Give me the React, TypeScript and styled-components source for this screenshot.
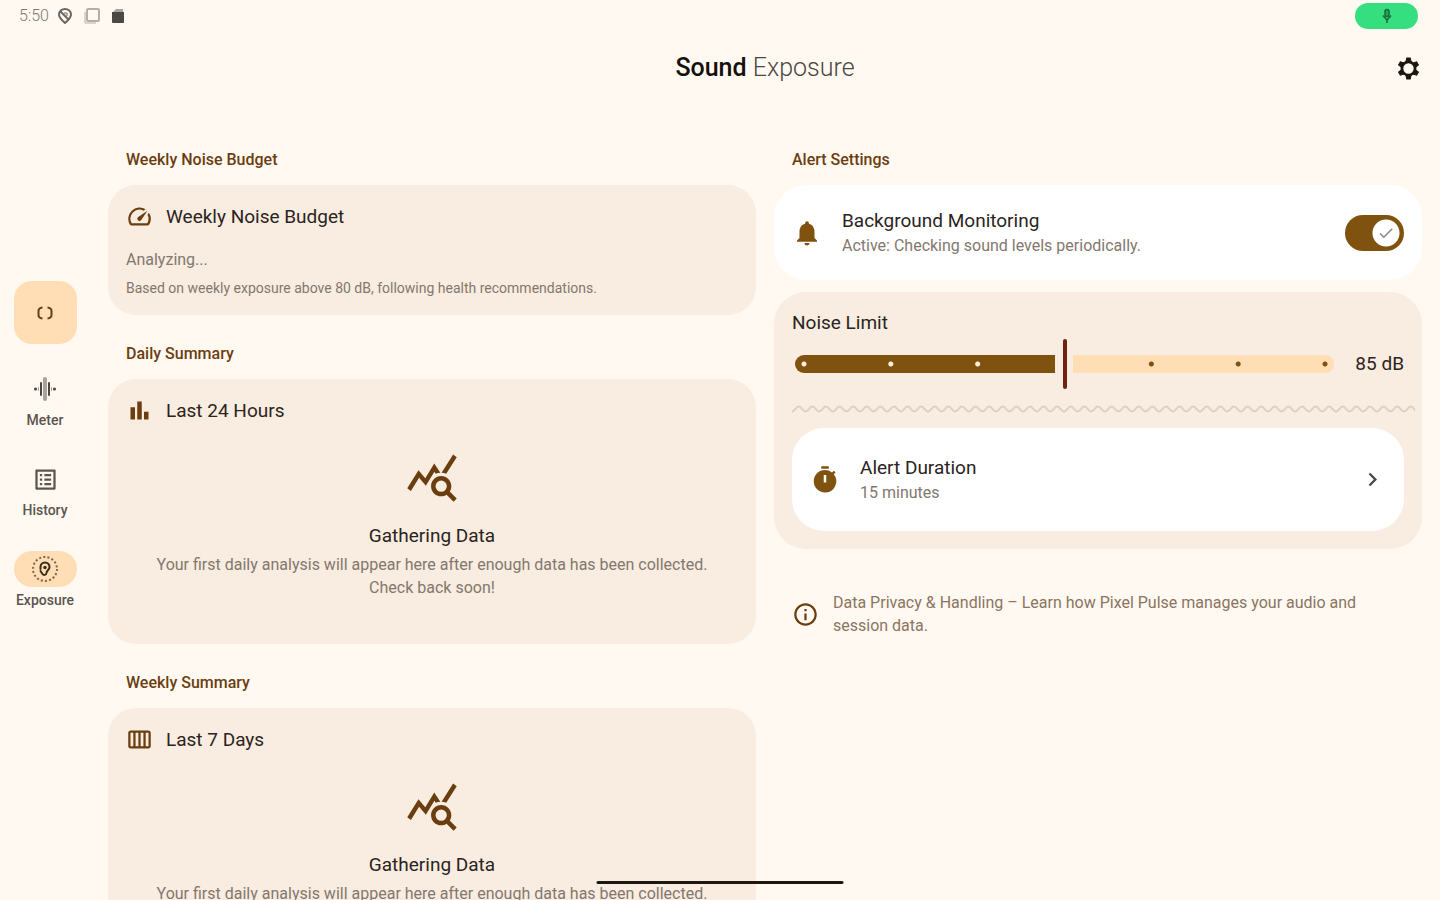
import React, { useState } from "react";
import styled, { createGlobalStyle, css } from "styled-components";
import {
  MdBarChart,
  MdCheck,
  MdChevronRight,
  MdInfoOutline,
  MdNotifications,
  MdOutlineCalendarViewWeek,
  MdOutlineListAlt,
  MdOutlineSpeed,
  MdQueryStats,
  MdTimer,
} from "react-icons/md";

const color = {
  page: "#fff9f2",
  card: "#f9ece0",
  raised: "#ffffff",
  accent: "#ffddb5",
  primary: "#80520f",
  deep: "#6b3e10",
  text: "#2b241d",
  muted: "#83786e",
  outline: "#dccfc3",
};

const GlobalStyle = createGlobalStyle`
  * { box-sizing: border-box; }
  body {
    margin: 0;
    background: ${color.page};
    color: ${color.text};
    font-family: Roboto, "Liberation Sans", sans-serif;
  }
  h1, h2, h3, p { margin: 0; }
  button { font: inherit; color: inherit; border: 0; background: none; padding: 0; cursor: pointer; }
`;

const Screen = styled.div`
  display: flex;
  flex-direction: column;
  height: 100vh;
  overflow: hidden;
`;

const StatusBar = styled.div`
  display: flex;
  flex: none;
  align-items: center;
  justify-content: space-between;
  height: 32px;
  padding: 0 22px 0 19px;
`;

const StatusIcons = styled.div`
  display: flex;
  align-items: center;
  gap: 10px;
  color: #7b7671;
  font-size: 16px;
  font-weight: 300;
  line-height: 20px;

  time { margin-right: -2px; }
`;

const MicPill = styled.div`
  display: flex;
  align-items: center;
  justify-content: center;
  width: 63px;
  height: 26px;
  border-radius: 13px;
  background: #35de7f;
  color: #176b3b;
`;

const Shell = styled.div`
  display: flex;
  flex: 1;
  min-height: 0;
`;

const Rail = styled.nav`
  display: flex;
  flex: none;
  flex-direction: column;
  align-items: center;
  justify-content: center;
  width: 90px;
  padding-bottom: 42px;
`;

const RailFab = styled.button`
  display: flex;
  align-items: center;
  justify-content: center;
  width: 63px;
  height: 63px;
  margin-bottom: 27px;
  border-radius: 18px;
  background: ${color.accent};
  color: ${color.deep};
`;

const RailItem = styled.a`
  display: flex;
  flex-direction: column;
  align-items: center;
  gap: 4px;
  height: 90px;
  color: #5b554f;
  font-size: 14px;
  font-weight: 500;
  line-height: 18px;
  text-decoration: none;

  &:last-child { height: 58px; }
`;

const RailIcon = styled.span<{ $active?: boolean }>`
  display: flex;
  align-items: center;
  justify-content: center;
  width: 63px;
  height: 36px;
  border-radius: 18px;
  background: ${(p) => (p.$active ? color.accent : "transparent")};
`;

const Main = styled.main`
  display: flex;
  flex: 1;
  flex-direction: column;
  min-width: 0;
  padding: 0 18px;
`;

const TopBar = styled.header`
  display: grid;
  grid-template-columns: 1fr auto 1fr;
  flex: none;
  align-items: center;
  height: 72px;
`;

const Title = styled.h1`
  grid-column: 2;
  color: #14100c;
  font-size: 25px;
  font-weight: 500;
  line-height: 32px;

  span { color: #4a4641; font-weight: 300; }
`;

const IconButton = styled.button`
  display: flex;
  justify-self: end;
  margin-right: 1px;
`;

const Columns = styled.div`
  display: grid;
  grid-template-columns: 1fr 1fr;
  gap: 18px;
  flex: 1;
  align-items: start;
  min-height: 0;
  padding-top: 44px;
  overflow: auto;
  scrollbar-width: none;
`;

const Column = styled.div`
  display: flex;
  flex-direction: column;
`;

const SectionLabel = styled.h2`
  padding: 0 18px;
  margin-bottom: 13px;
  color: ${color.deep};
  font-size: 16px;
  font-weight: 500;
  line-height: 24px;
`;

const Card = styled.section<{ $tall?: boolean }>`
  padding: 18px;
  margin-bottom: 27px;
  border-radius: 28px;
  background: ${color.card};
  ${(p) => p.$tall && css`min-height: 265px;`}
`;

const CardHead = styled.div`
  display: flex;
  align-items: center;
  gap: 13px;
  color: ${color.deep};
`;

const CardTitle = styled.h3`
  color: ${color.text};
  font-size: 19px;
  font-weight: 400;
  line-height: 27px;
`;

const Body = styled.p`
  color: ${color.muted};
  font-size: 16px;
  line-height: 23px;
`;

const Note = styled.p`
  margin-top: 8px;
  color: ${color.muted};
  font-size: 14px;
  line-height: 18px;
`;

const Analysis = styled.div`
  padding-top: 18px;
`;

const Empty = styled.div`
  display: flex;
  flex-direction: column;
  align-items: center;
  padding-top: 26px;
  text-align: center;
  color: ${color.deep};

  h3 { margin: 18px 0 4px; }
`;

const SettingRow = styled.label`
  display: flex;
  align-items: center;
  min-height: 95px;
  padding: 0 18px;
  margin-bottom: 12px;
  border-radius: 32px;
  background: ${color.raised};
  color: ${color.primary};
`;

const DurationRow = styled.button`
  display: flex;
  align-items: center;
  width: 100%;
  min-height: 103px;
  padding: 0 18px;
  border-radius: 32px;
  background: ${color.raised};
  color: ${color.primary};
  text-align: left;
`;

const RowText = styled.span`
  display: flex;
  flex: 1;
  flex-direction: column;
  padding-left: 20px;
`;

const RowTitle = styled.span`
  color: ${color.text};
  font-size: 19px;
  line-height: 26px;
`;

const RowSub = styled.span`
  color: ${color.muted};
  font-size: 16px;
  line-height: 23px;
`;

const Switch = styled.span`
  position: relative;
  display: flex;
  width: 59px;
  height: 36px;

  input {
    appearance: none;
    width: 100%;
    height: 100%;
    margin: 0;
    border-radius: 18px;
    background: radial-gradient(circle at 18px 50%, #ffffff 13px, transparent 14px) #b9aca0;
    cursor: pointer;
  }
  input:checked {
    background: radial-gradient(circle at 41px 50%, #ffffff 13px, transparent 14px) ${color.primary};
  }
  svg {
    position: absolute;
    top: 9px;
    left: 32px;
    color: #8b8580;
    pointer-events: none;
  }
`;

const LimitCard = styled.section`
  padding: 18px;
  border-radius: 32px;
  background: ${color.card};
`;

const LimitLabel = styled.label`
  display: block;
  color: ${color.text};
  font-size: 19px;
  line-height: 26px;
`;

const LimitRow = styled.div`
  display: flex;
  align-items: center;
  gap: 21px;
  height: 56px;
  padding-left: 3px;

  output {
    font-size: 19px;
    line-height: 26px;
  }
`;

const STEPS = 6;

const tickLayers = (share: number) =>
  Array.from({ length: STEPS + 1 }, (_, i) => i / STEPS)
    .filter((at) => Math.abs(at - share) > 0.01)
    .map(
      (at) =>
        `radial-gradient(circle at calc(9px + (100% - 18px) * ${at}) 50%, ${
          at < share ? "#ffeedd" : color.primary
        } 2px, transparent 3px)`
    )
    .join(",");

const trackFill = css<{ $share: number }>`
  height: 18px;
  border-radius: 9px;
  background: ${(p) => tickLayers(p.$share)},
    linear-gradient(
      to right,
      ${color.primary} calc(${(p) => p.$share * 100}% - 9px),
      transparent calc(${(p) => p.$share * 100}% - 9px),
      transparent calc(${(p) => p.$share * 100}% + 9px),
      ${color.accent} calc(${(p) => p.$share * 100}% + 9px)
    );
`;

const Slider = styled.input<{ $share: number }>`
  appearance: none;
  flex: 1;
  min-width: 0;
  height: 50px;
  margin: 0;
  background: transparent;
  cursor: pointer;

  &::-webkit-slider-runnable-track { ${trackFill} }
  &::-moz-range-track { ${trackFill} }
  &::-webkit-slider-thumb {
    appearance: none;
    width: 4px;
    height: 50px;
    margin-top: -16px;
    border-radius: 2px;
    background: #6e2410;
  }
  &::-moz-range-thumb {
    width: 4px;
    height: 50px;
    border: 0;
    border-radius: 2px;
    background: #6e2410;
  }
`;

const WaveBox = styled.div`
  height: 36px;
  margin-right: -11px;

  svg { display: block; width: 100%; height: 36px; }
`;

const Privacy = styled.a`
  display: flex;
  align-items: center;
  gap: 14px;
  padding: 0 18px;
  margin-top: 42px;
  color: #8a7561;
  font-size: 16px;
  line-height: 23px;
  text-decoration: none;

  svg { flex: none; color: ${color.deep}; }
`;

const HomeHandle = styled.div`
  position: fixed;
  bottom: 16px;
  left: 50%;
  width: 247px;
  height: 3px;
  border-radius: 2px;
  background: #1d1712;
  transform: translateX(-50%);
`;

const LocationOffIcon = () => (
  <svg width="16" height="18" viewBox="0 0 16 18" fill="none" stroke="#6b6662" strokeWidth="2">
    <path d="M8 16C4 12.500 2 10 2 7.500a6 5.500 0 0 1 12 0c0 2.500-2 5-6 8.500z" />
    <path d="M3 4l9 9" />
    <path d="M7 6h3v3" strokeWidth="1" />
  </svg>
);

const CopyIcon = () => (
  <svg width="18" height="18" viewBox="0 0 18 18" fill="none" stroke="#b5afa9" strokeWidth="2">
    <rect x="4" y="2" width="12" height="12" rx="1" />
    <path d="M2 5v11h11" strokeWidth="1" />
  </svg>
);

const SdCardIcon = () => (
  <svg width="14" height="18" viewBox="0 0 14 18">
    <path d="M5 2h7v3H2z" fill="#a8a39e" />
    <path d="M1 5h12v10a1 1 0 0 1-1 1H2a1 1 0 0 1-1-1z" fill="#4b4846" />
  </svg>
);

const MicIcon = () => (
  <svg width="14" height="16" viewBox="0 0 14 16" fill="none" stroke="currentColor" strokeWidth="1.500">
    <rect x="5" y="1.500" width="4" height="7" rx="2" fill="currentColor" fillOpacity="0.500" />
    <path d="M3 7.500L7 12l4-4.500M7 11v4" />
  </svg>
);

const GearIcon = () => (
  <svg width="25" height="25" viewBox="0 0 24 24" fill="none" stroke="#1d1712">
    <circle cx="12" cy="12" r="6.300" strokeWidth="2.600" />
    {[0, 60, 120, 180, 240, 300].map((angle) => (
      <path key={angle} d="M9.600 5.400L10.300 2h3.400l0.700 3.400z" fill="#1d1712" transform={`rotate(${angle} 12 12)`} />
    ))}
  </svg>
);

const FloatIcon = () => (
  <svg width="18" height="14" viewBox="0 0 18 14" fill="none" stroke="currentColor" strokeWidth="2">
    <path d="M6.500 1.500Q2.500 2 2.500 5v4Q2.500 12 6.500 12.500" />
    <path d="M11.500 1.500Q15.500 2 15.500 5v4Q15.500 12 11.500 12.500" />
  </svg>
);

const MeterIcon = () => (
  <svg width="24" height="24" viewBox="0 0 24 24" fill="none" stroke="#4b4640" strokeLinecap="round">
    <path d="M8 6v12M16 6v12" strokeWidth="2" />
    <path d="M12 2v20" stroke="#a8a29c" strokeWidth="4" />
    <path d="M2.500 12h.1M21.400 12h.1" strokeWidth="3" />
    <path d="M5.500 10.500v3M18.500 10.500v3" stroke="#a8a29c" strokeWidth="1" />
  </svg>
);

const ExposureIcon = () => (
  <svg width="28" height="28" viewBox="0 0 28 28" fill="none" stroke="#3a2c1b">
    <circle cx="14" cy="14" r="12" strokeWidth="2" strokeDasharray="2 2.190" stroke="#7d6648" />
    <path
      d="M9.500 14V12a4.500 4.500 0 0 1 9 0c0 3-3 3.500-3 6a2.200 2.200 0 0 1-4 1l-2-3"
      strokeWidth="2"
      strokeLinecap="round"
    />
    <circle cx="14" cy="12.500" r="1.700" fill="#3a2c1b" stroke="none" />
  </svg>
);

const Wave = () => (
  <WaveBox>
    <svg aria-hidden="true">
      <defs>
        <pattern id="wave" width="13.600" height="36" patternUnits="userSpaceOnUse">
          <path
            d="M-3.400 17Q0 22 3.400 17T10.200 17T17 17"
            fill="none"
            stroke={color.outline}
            strokeWidth="2"
          />
        </pattern>
      </defs>
      <rect width="100%" height="36" fill="url(#wave)" />
    </svg>
  </WaveBox>
);

const GatheringData = () => (
  <Empty>
    <MdQueryStats size={54} />
    <CardTitle>Gathering Data</CardTitle>
    <Body>
      Your first daily analysis will appear here after enough data has been collected.
      <br />
      Check back soon!
    </Body>
  </Empty>
);

export default function App() {
  const [monitoring, setMonitoring] = useState(true);
  const [limit, setLimit] = useState(85);

  return (
    <Screen>
      <GlobalStyle />
      <StatusBar>
        <StatusIcons>
          <time>5:50</time>
          <LocationOffIcon />
          <CopyIcon />
          <SdCardIcon />
        </StatusIcons>
        <MicPill>
          <MicIcon />
        </MicPill>
      </StatusBar>
      <Shell>
        <Rail>
          <RailFab aria-label="Floating window">
            <FloatIcon />
          </RailFab>
          <RailItem href="#meter">
            <RailIcon><MeterIcon /></RailIcon>
            Meter
          </RailItem>
          <RailItem href="#history">
            <RailIcon><MdOutlineListAlt size={27} /></RailIcon>
            History
          </RailItem>
          <RailItem href="#exposure" aria-current="page">
            <RailIcon $active><ExposureIcon /></RailIcon>
            Exposure
          </RailItem>
        </Rail>
        <Main>
          <TopBar>
            <Title>
              Sound <span>Exposure</span>
            </Title>
            <IconButton aria-label="Settings">
              <GearIcon />
            </IconButton>
          </TopBar>
          <Columns>
            <Column>
              <SectionLabel>Weekly Noise Budget</SectionLabel>
              <Card>
                <CardHead>
                  <MdOutlineSpeed size={27} />
                  <CardTitle>Weekly Noise Budget</CardTitle>
                </CardHead>
                <Analysis>
                  <Body>Analyzing...</Body>
                  <Note>Based on weekly exposure above 80 dB, following health recommendations.</Note>
                </Analysis>
              </Card>
              <SectionLabel>Daily Summary</SectionLabel>
              <Card $tall>
                <CardHead>
                  <MdBarChart size={27} />
                  <CardTitle>Last 24 Hours</CardTitle>
                </CardHead>
                <GatheringData />
              </Card>
              <SectionLabel>Weekly Summary</SectionLabel>
              <Card $tall>
                <CardHead>
                  <MdOutlineCalendarViewWeek size={27} />
                  <CardTitle>Last 7 Days</CardTitle>
                </CardHead>
                <GatheringData />
              </Card>
            </Column>
            <Column>
              <SectionLabel>Alert Settings</SectionLabel>
              <SettingRow>
                <MdNotifications size={30} />
                <RowText>
                  <RowTitle>Background Monitoring</RowTitle>
                  <RowSub>Active: Checking sound levels periodically.</RowSub>
                </RowText>
                <Switch>
                  <input
                    type="checkbox"
                    role="switch"
                    checked={monitoring}
                    onChange={(e) => setMonitoring(e.target.checked)}
                  />
                  {monitoring && <MdCheck size={18} />}
                </Switch>
              </SettingRow>
              <LimitCard>
                <LimitLabel htmlFor="limit">Noise Limit</LimitLabel>
                <LimitRow>
                  <Slider
                    id="limit"
                    type="range"
                    min={70}
                    max={100}
                    step={5}
                    value={limit}
                    $share={(limit - 70) / 30}
                    onChange={(e) => setLimit(Number(e.target.value))}
                  />
                  <output htmlFor="limit">{limit} dB</output>
                </LimitRow>
                <Wave />
                <DurationRow>
                  <MdTimer size={30} />
                  <RowText>
                    <RowTitle>Alert Duration</RowTitle>
                    <RowSub>15 minutes</RowSub>
                  </RowText>
                  <MdChevronRight size={27} color="#4b4640" />
                </DurationRow>
              </LimitCard>
              <Privacy href="#privacy">
                <MdInfoOutline size={27} />
                <span>
                  Data Privacy &amp; Handling – Learn how Pixel Pulse manages your audio and session data.
                </span>
              </Privacy>
            </Column>
          </Columns>
        </Main>
      </Shell>
      <HomeHandle />
    </Screen>
  );
}
